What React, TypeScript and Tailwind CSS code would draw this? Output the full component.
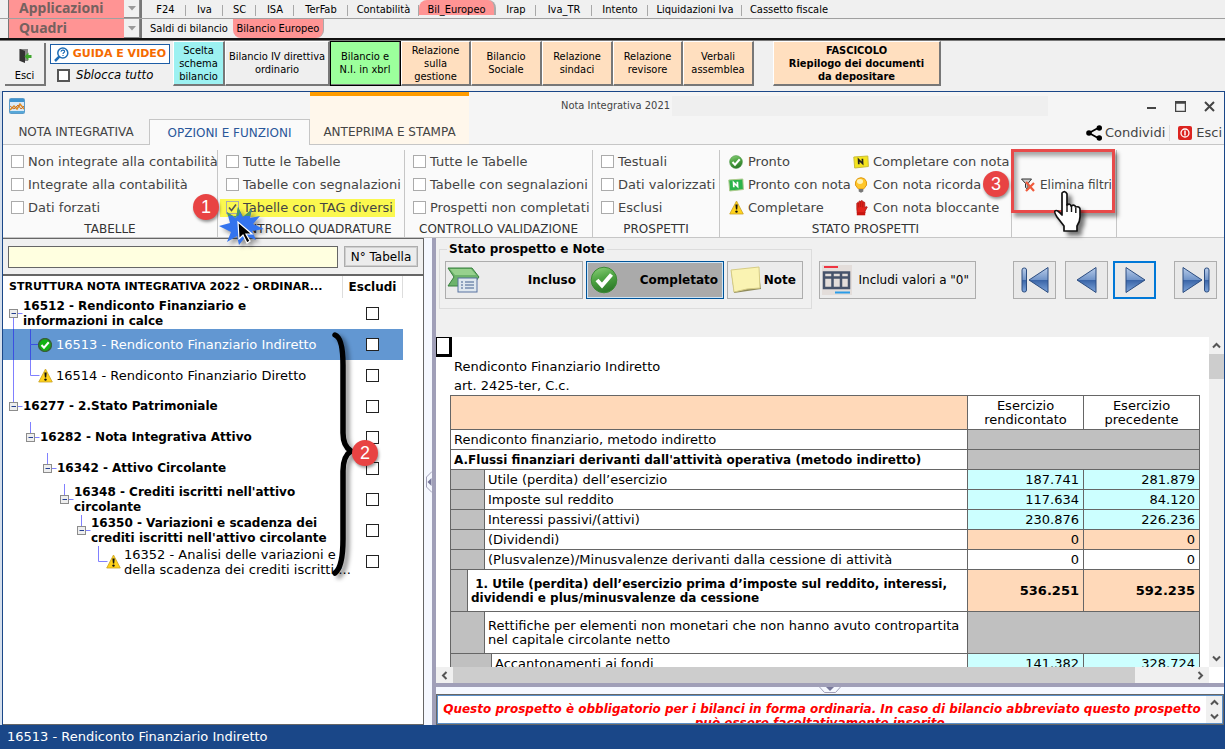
import type { ReactNode } from "react";
import clsx from "clsx";

const modules = [
  { label: "F24", width: "w-[41px]" },
  { label: "Iva", width: "w-[37px]" },
  { label: "SC", width: "w-[33px]" },
  { label: "ISA", width: "w-[38px]" },
  { label: "TerFab", width: "w-[54px]" },
  { label: "Contabilità", width: "w-[71px]" },
  { label: "Bil_Europeo", width: "w-[77px]", active: true },
  { label: "Irap", width: "w-[40px]" },
  { label: "Iva_TR", width: "w-[56px]" },
  { label: "Intento", width: "w-[56px]" },
  { label: "Liquidazioni Iva", width: "w-[94px]" },
  { label: "Cassetto fiscale", width: "w-[94px]" },
];

const toolbar = [
  { label: "Scelta\nschema\nbilancio", style: "w-[52px] bg-[#9cf1f1]" },
  { label: "Bilancio IV direttiva\nordinario", style: "w-[105px] bg-[#efefef]" },
  { label: "Bilancio e\nN.I. in xbrl", style: "w-[71px] bg-[#9cff9c] outline outline-black -outline-offset-1" },
  { label: "Relazione\nsulla\ngestione", style: "w-[70px] bg-[#ffdfbf]" },
  { label: "Bilancio\nSociale", style: "w-[71px] bg-[#ffdfbf]" },
  { label: "Relazione\nsindaci", style: "w-[71px] bg-[#ffdfbf]" },
  { label: "Relazione\nrevisore", style: "w-[70px] bg-[#ffdfbf]" },
  { label: "Verbali\nassemblea", style: "w-[71px] bg-[#ffdfbf]" },
  { label: "FASCICOLO\nRiepilogo dei documenti\nda depositare", style: "ml-[19px] w-[168px] bg-[#ffdfbf] font-bold" },
];

type Node = {
  id: string;
  label: string;
  level: number;
  kind: "group" | "ok" | "warn";
  through?: number[];
  down?: boolean;
  first?: boolean;
  selected?: boolean;
};

const nodes: Node[] = [
  { id: "16512", label: "16512 - Rendiconto Finanziario e\ninformazioni in calce", level: 0, kind: "group", down: true, first: true },
  { id: "16513", label: "16513 - Rendiconto Finanziario Indiretto", level: 1, kind: "ok", through: [0], down: true, selected: true },
  { id: "16514", label: "16514 - Rendiconto Finanziario Diretto", level: 1, kind: "warn", through: [0] },
  { id: "16277", label: "16277 - 2.Stato Patrimoniale", level: 0, kind: "group" },
  { id: "16282", label: "16282 - Nota Integrativa Attivo", level: 1, kind: "group" },
  { id: "16342", label: "16342 - Attivo Circolante", level: 2, kind: "group" },
  { id: "16348", label: "16348 - Crediti iscritti nell'attivo\ncircolante", level: 3, kind: "group" },
  { id: "16350", label: "16350 - Variazioni e scadenza dei\ncrediti iscritti nell'attivo circolante", level: 4, kind: "group" },
  { id: "16352", label: "16352 - Analisi delle variazioni e\ndella scadenza dei crediti iscritti.:..", level: 5, kind: "warn" },
];

type Row = { label: string; indent: number; values?: string[]; tone?: string; bold?: boolean; height: string };

const rows: Row[] = [
  { label: "Rendiconto finanziario, metodo indiretto", indent: 0, height: "h-5" },
  { label: "A.Flussi finanziari derivanti dall'attività operativa (metodo indiretto)", indent: 0, bold: true, height: "h-5" },
  { label: "Utile (perdita) dell’esercizio", indent: 2, values: ["187.741", "281.879"], tone: "bg-[#ccffff]", height: "h-5" },
  { label: "Imposte sul reddito", indent: 2, values: ["117.634", "84.120"], tone: "bg-[#ccffff]", height: "h-5" },
  { label: "Interessi passivi/(attivi)", indent: 2, values: ["230.876", "226.236"], tone: "bg-[#ccffff]", height: "h-5" },
  { label: "(Dividendi)", indent: 2, values: ["0", "0"], tone: "bg-[#ffd9b9]", height: "h-5" },
  { label: "(Plusvalenze)/Minusvalenze derivanti dalla cessione di attività", indent: 2, values: ["0", "0"], tone: "bg-white", height: "h-5" },
  { label: " 1. Utile (perdita) dell’esercizio prima d’imposte sul reddito, interessi,\ndividendi e plus/minusvalenze da cessione", indent: 1, values: ["536.251", "592.235"], tone: "bg-[#ffd9b9]", bold: true, height: "h-[42px]" },
  { label: "Rettifiche per elementi non monetari che non hanno avuto contropartita\nnel capitale circolante netto", indent: 2, height: "h-[42px]" },
  { label: "Accantonamenti ai fondi", indent: 3, values: ["141.382", "328.724"], tone: "bg-[#ccffff]", height: "h-5" },
];

const Warning = () => (
  <svg width="15" height="15" viewBox="0 0 15 15" className="shrink-0">
    <path d="M7.5 1 14.3 14H.7Z" fill="#ffd21a" stroke="#c9a227" strokeWidth=".8" strokeLinejoin="round" />
    <path d="M6.4 4.6h2.3l-.5 5H6.9Z" fill="#111" />
    <circle cx="7.5" cy="11.6" r="1.2" fill="#111" />
  </svg>
);

const Ok = ({ size = 14, dark = false }: { size?: number; dark?: boolean }) => (
  <svg width={size} height={size} viewBox="0 0 28 28" className="shrink-0">
    <defs>
      <linearGradient id="okFill" x2=".3" y2="1">
        <stop stopColor="#8ed27c" />
        <stop offset=".5" stopColor="#4fa544" />
        <stop offset="1" stopColor="#2f7d2b" />
      </linearGradient>
    </defs>
    <circle cx="14" cy="14" r="12.8" fill={dark ? "#12b312" : "url(#okFill)"} stroke={dark ? "#376038" : "#3d8a37"} strokeWidth={dark ? 3 : 1} />
    <path d="m7 14 5 5.5L21.500 8.500" fill="none" stroke="#fff" strokeWidth="4" />
  </svg>
);

const NoteFlag = ({ green = false }: { green?: boolean }) => (
  <svg width="16" height="14" viewBox="0 0 16 14" className="shrink-0">
    <path d="m.8 2 14-1 .6 10.500-13.700 1.500Z" fill={green ? "#2bb34b" : "#f4e41e"} stroke={green ? "#aeca8c" : "#c9bd3a"} />
    <path d="M5.800 9.300 5.600 4.600l4 3.900-.2-4.700" fill="none" stroke={green ? "#fff" : "#222"} strokeWidth="1.700" />
  </svg>
);

const Bulb = () => (
  <svg width="14" height="16" viewBox="0 0 14 16" className="shrink-0">
    <path d="M7 .7a5.700 5.700 0 0 0-3.500 10.200L4.500 12h5l1-1.100A5.700 5.700 0 0 0 7 .7Z" fill="#ffc629" stroke="#e09a12" />
    <ellipse cx="6" cy="4.500" rx="3" ry="2.400" fill="#fff3b8" />
    <path d="M4.700 12h4.600v2.500L7 15.700l-2.300-1.200Z" fill="#777" />
  </svg>
);

const StopHand = () => (
  <svg width="14" height="16" viewBox="0 0 14 16" className="shrink-0">
    <path d="M2.800 9V3.200q.9-1.400 1.900 0V1.700q1-1.400 2 0V1q1.200-1.200 2.100.2v1q1.200-1 2 .4v5q1.500-1.600 2.500-.6l-2.200 4.200V13H3.200Z" fill="#e3231b" stroke="#a51410" strokeWidth=".7" />
    <path d="M4.700 3v4.500M6.700 2v5M8.800 2.500V7.500" stroke="#a51410" strokeWidth=".7" />
    <path d="M2.800 12.500h8.400v2.800H2.800Z" fill="#c9150f" />
  </svg>
);

const Callout = ({ n, className }: { n: number; className: string }) => (
  <span className={clsx("absolute z-20 flex size-[26px] items-center justify-center rounded-full bg-[#e84343] font-['Liberation_Sans'] text-lg text-white shadow-[1px_2px_3px_#0006]", className)}>
    {n}
  </span>
);

const Check = ({ label, checked, highlight }: { label: string; checked?: boolean; highlight?: boolean }) => (
  <label className="flex h-[23px] items-center whitespace-nowrap text-[#444]">
    <span className={clsx("flex h-[18px] items-center gap-1", highlight && "-ml-1.5 bg-[#fbf84f] pr-0.5 pl-1.5")}>
      <span className="grid">
        <input type="checkbox" defaultChecked={checked} className={clsx("peer col-start-1 row-start-1 size-[13px] appearance-none border border-[#ababab]", highlight ? "bg-transparent" : "bg-white")} />
        <svg viewBox="0 0 13 13" className="pointer-events-none col-start-1 row-start-1 hidden size-[13px] peer-checked:block">
          <path d="m3 6.500 2.500 3 4.500-6" fill="none" stroke="#555" strokeWidth="1.600" />
        </svg>
      </span>
      {label}
    </span>
  </label>
);

const Group = ({ title, width, children }: { title: string; width: string; children: ReactNode }) => (
  <section className={clsx("relative flex shrink-0 flex-col border-r border-[#c6c6c6] pl-2", width)}>
    {children}
    <h2 className="mt-auto pr-2 text-center text-xs text-[#333]">{title}</h2>
  </section>
);

const RibbonLink = ({ icon, label, className }: { icon: ReactNode; label: string; className?: string }) => (
  <button className={clsx("flex h-[23px] items-center gap-1 whitespace-nowrap text-[#444]", className)}>
    <span className="flex w-4 justify-center">{icon}</span>
    {label}
  </button>
);

const Picker = ({ label }: { label: string }) => (
  <div className="relative ml-2 h-full w-[134px] border-l border-[#777]">
    <select aria-label={label} className="block h-full w-full appearance-none border-r-2 border-[#777] bg-[#ff9494] pb-0.5 pl-2.5 font-['Noto_Sans',sans-serif] text-sm leading-4 font-bold text-[#75615f]">
      <option>{label}</option>
    </select>
    <span className="pointer-events-none absolute inset-y-0 right-0.5 flex w-4 items-center justify-center border-r border-b border-[#888] bg-[#f0f0f0]">
      <svg width="8" height="5"><path d="M0 0h8L4 4.500Z" fill="#9a9a9a" /></svg>
    </span>
  </div>
);

/* Connector lines, expander and leaf icon slot of one tree row */
const Branch = ({ node }: { node: Node }) => {
  const x = 10 + node.level * 17 + 0.5;
  const group = node.kind === "group";
  return (
    <svg width={20 + node.level * 17} height="31" className="shrink-0" stroke={node.selected ? "#3a50e0" : "#8080ff"} fill="none">
      {node.through?.map((l) => <path key={l} d={`M${10.5 + l * 17} 0V31`} />)}
      {!node.first && <path d={`M${x} 0V15.500`} />}
      {node.down && <path d={`M${x} 15.500V31`} />}
      <path d={`M${x} 15.500H${x + 9}`} />
      {group && (
        <>
          <rect x={x - 4} y="11.500" width="8" height="8" fill="#eee" stroke="#8c8c8c" />
          <path d={`M${x - 2} 15.500h4.500`} stroke="#26418f" />
        </>
      )}
    </svg>
  );
};

const NavIcon = ({ back = false, edge = false }: { back?: boolean; edge?: boolean }) => (
  <svg width="30" height="28" viewBox="0 0 30 28" className={back ? "-scale-x-100" : ""}>
    <defs>
      <linearGradient id="nav" x2="0" y2="1">
        <stop stopColor="#b9cdea" />
        <stop offset=".5" stopColor="#6f93c8" />
        <stop offset=".52" stopColor="#3b66a8" />
        <stop offset="1" stopColor="#7fa6dc" />
      </linearGradient>
    </defs>
    <path d={edge ? "M2 1.500 21 14 2 26.500Z" : "M6 1.500 25 14 6 26.500Z"} fill="url(#nav)" stroke="#2c4d80" />
    {edge && <rect x="23.500" y="2" width="4.500" height="24" rx="2" fill="url(#nav)" stroke="#2c4d80" />}
  </svg>
);

const NavButton = ({ label, className, children }: { label: string; className?: string; children: ReactNode }) => (
  <button aria-label={label} className={clsx("flex h-[38px] w-[43px] items-center justify-center bg-[#e9e9e9]", className ?? "border border-[#adadad]")}>
    {children}
  </button>
);

const Arrow = ({ dir }: { dir: "up" | "down" | "left" | "right" }) => (
  <svg width="9" height="9" viewBox="0 0 9 9" className={clsx(dir === "down" && "rotate-180", dir === "left" && "-rotate-90", dir === "right" && "rotate-90")}>
    <path d="m1 6.500 3.500-3.500L8 6.500" fill="none" stroke="#555" strokeWidth="2" />
  </svg>
);

const TopMenus = () => (
  <header className="shrink-0 bg-[#f0f0f0] font-['DejaVu_Sans_Condensed','DejaVu_Sans',sans-serif] text-[11px]">
    <div className="flex h-[19px] border-b border-[#a0a0a0]">
      <Picker label="Applicazioni" />
      <nav className="ml-[3px] flex">
        {modules.map((m) => (
          <button
            key={m.label}
            className={clsx(
              "flex shrink-0 items-center justify-center whitespace-nowrap",
              m.width,
              m.active ? "mb-[3px] rounded-t-lg border-r-2 border-[#aaa] bg-[#ff9494] pt-[5px]" : "bg-[linear-gradient(#a8a8a8,#a8a8a8)] bg-[length:1px_11px] bg-[position:right_5px] bg-no-repeat pt-0.5 last:bg-none",
            )}
          >
            {m.label}
          </button>
        ))}
      </nav>
    </div>
    <div className="flex h-[19px]">
      <Picker label="Quadri" />
      <nav className="ml-[3px] flex">
        <button className="w-[88px]">Saldi di bilancio</button>
        <button className="w-[91px] rounded-b-lg border-r border-[#aaa] bg-[#ff9494]">Bilancio Europeo</button>
      </nav>
    </div>
    <div className="flex h-[53px] border-t-2 border-[#111] pl-[5px] pt-px shadow-[inset_0_1px_#777]">
      <button className="mt-0.5 flex h-[43px] w-[41px] flex-col items-center justify-end border-r-2 border-b-2 border-[#777]">
        <svg width="16" height="16" viewBox="0 0 16 16">
          <path d="M2 1h9v12H2Z" fill="#888" />
          <path d="m3 1 5 2v12l-5-2Z" fill="#333" />
          <path d="M14.500 7h-3V4.500l-4 4 4 4V10h3Z" fill="#3fa62d" />
        </svg>
        <span className="pt-1">Esci</span>
      </button>
      <div className="ml-1 flex w-[120px] flex-col pt-[3px]">
        <button className="flex h-5 items-center justify-center gap-1 border border-[#1c5da6] bg-white font-['DejaVu_Sans',sans-serif] text-[11px] font-bold whitespace-nowrap text-[#f56a00]">
          <svg width="15" height="15" viewBox="0 0 15 15" fill="none" stroke="#1f6db5">
            <circle cx="8.800" cy="6" r="5" strokeWidth="1.500" />
            <path d="M5.300 9.700 1 14" strokeWidth="2.500" />
            <path d="M7 4.800q.2-1.800 2-1.700 2 .3 1.500 1.800-1.500 1-1.500 2M9 8v1" strokeWidth="1.200" />
          </svg>
          GUIDA E VIDEO
        </button>
        <label className="flex items-center gap-1.5 pt-[3px] pl-[7px] text-[13px] italic">
          <input type="checkbox" className="size-[13px] appearance-none border-2 border-[#555] bg-white" />
          Sblocca tutto
        </label>
      </div>
      <div className="ml-[3px] flex h-[45px]">
        {toolbar.map((b) => (
          <button key={b.label} className={clsx("shrink-0 border-t border-l border-r-2 border-b-2 border-t-white border-l-white border-r-[#777] border-b-[#777] leading-[13px] whitespace-pre-line", b.style)}>
            {b.label}
          </button>
        ))}
      </div>
    </div>
  </header>
);

const TitleBar = () => (
  <div className="flex h-[53px] shrink-0 border-b border-[#c6c6c6] bg-[#f5f5f5] text-[#444]">
    <div className="flex w-[307px] shrink-0 flex-col justify-between">
      <svg width="16" height="16" viewBox="0 0 16 16" className="mt-1.5 ml-1.5">
        <rect x=".5" y=".5" width="15" height="15" rx="1" fill="#dceaf5" stroke="#5b9bc9" />
        <path d="M1 1h14v3H1Z" fill="#3e93cf" />
        <path d="M1 12 5 8l3 3 3-5 4 5" fill="none" stroke="#e08a1e" strokeWidth="1.500" />
        <path d="M1 8 5 11l4-4 3 4 3-3" fill="none" stroke="#c9702a" />
        <path d="M1 13h14v2H1Z" fill="#56a7d8" />
      </svg>
      <div className="-mb-px flex h-[26px] text-xs">
        <button className="w-[146px] shrink-0 whitespace-nowrap">NOTA INTEGRATIVA</button>
        <button className="w-[161px] shrink-0 border border-b-0 border-[#c6c6c6] bg-[#fafafa] whitespace-nowrap text-[#2a579a]">OPZIONI E FUNZIONI</button>
      </div>
    </div>
    <button className="flex w-[159px] shrink-0 items-end justify-center border-t-4 border-[#ff9c00] bg-[#fff7eb] pb-1 text-xs whitespace-nowrap">ANTEPRIMA E STAMPA</button>
    <div className="flex min-w-0 grow flex-col justify-between">
      <div className="flex items-center pt-1">
        <h1 className="mr-0.5 ml-[92px] shrink-0 font-['DejaVu_Sans_Condensed','DejaVu_Sans',sans-serif] text-[11px]">Nota Integrativa 2021</h1>
        <span className="h-5 min-w-0 max-w-[376px] grow bg-[#efefef]" />
        <div className="ml-auto flex gap-[18px] pr-[9px]">
          <button aria-label="Riduci"><svg width="11" height="11"><path d="M1 7h9" stroke="#444" strokeWidth="2" /></svg></button>
          <button aria-label="Ingrandisci"><svg width="11" height="11" fill="none" stroke="#444"><path d="M.5.5h10v10H.5ZM0 2h11" strokeWidth="1.500" /></svg></button>
          <button aria-label="Chiudi"><svg width="11" height="11"><path d="m1 1 9 9M10 1 1 10" stroke="#444" strokeWidth="2" /></svg></button>
        </div>
      </div>
      <div className="flex h-[23px] items-center justify-end gap-1 pr-0.5">
        <button className="flex items-center gap-0.5">
          <svg width="17" height="16" viewBox="0 0 17 16">
            <path d="M13 2.500 3 8l10 5.500" fill="none" stroke="#000" strokeWidth="1.800" />
            <circle cx="13.300" cy="3" r="2.700" /><circle cx="3" cy="8" r="2.800" /><circle cx="13.300" cy="13" r="2.700" />
          </svg>
          Condividi
        </button>
        <button className="flex items-center gap-1 border-l border-[#ddd] pl-2">
          <svg width="14" height="14" viewBox="0 0 14 14">
            <rect width="14" height="14" rx="2" fill="#dc2420" />
            <circle cx="7" cy="7" r="4" fill="none" stroke="#fff" strokeWidth="1.300" />
            <path d="M7 4.500v5" stroke="#fff" strokeWidth="1.500" />
          </svg>
          Esci
        </button>
      </div>
    </div>
  </div>
);

const Ribbon = () => (
  <div className="flex h-[93px] shrink-0 border-b border-[#c6c6c6] bg-[#fafafa] pt-[5px]">
    <Group title="TABELLE" width="w-[215px]">
      <Check label="Non integrate alla contabilità" />
      <Check label="Integrate alla contabilità" />
      <Check label="Dati forzati" />
      <Callout n={1} className="-right-0.5 top-11" />
    </Group>
    <Group title="CONTROLLO QUADRATURE" width="w-[187px]">
      <Check label="Tutte le Tabelle" />
      <Check label="Tabelle con segnalazioni" />
      <Check label="Tabelle con TAG diversi" checked highlight />
      <svg width="48" height="44" viewBox="0 0 48 44" className="pointer-events-none absolute top-14 left-0 z-10 drop-shadow-[3px_3px_2px_#0006]">
        <path d="m1 20 11-3L9 6l9 6 2-11 5 10 9-8-2 9 10-2-7 8 11 5-12 2 4 9-10-4-7 9-2-9-10 6 4-10Z" fill="#3474ee" />
        <path d="m9 6 9 6 2-11 5 10 9-8-2 7H10Z" fill="#4b9a62" />
        <path d="m12 15 8-4 2-5 3 6 5-2 5 4-6 8-14 1Z" fill="#3474ee" />
        <path d="m20 16 1 17 4-4 4 8 3-2-4-7h6Z" fill="#000" stroke="#fff" strokeWidth="1.200" />
      </svg>
    </Group>
    <Group title="CONTROLLO VALIDAZIONE" width="w-[188px]">
      <Check label="Tutte le Tabelle" />
      <Check label="Tabelle con segnalazioni" />
      <Check label="Prospetti non completati" />
    </Group>
    <Group title="PROSPETTI" width="w-[127px]">
      <Check label="Testuali" />
      <Check label="Dati valorizzati" />
      <Check label="Esclusi" />
    </Group>
    <Group title="STATO PROSPETTI" width="w-[292px]">
      <div className="flex">
        <div className="w-[125px] shrink-0">
          <RibbonLink icon={<Ok />} label="Pronto" />
          <RibbonLink icon={<NoteFlag green />} label="Pronto con nota" />
          <RibbonLink icon={<Warning />} label="Completare" />
        </div>
        <div>
          <RibbonLink icon={<NoteFlag />} label="Completare con nota" />
          <RibbonLink icon={<Bulb />} label="Con nota ricorda" />
          <RibbonLink icon={<StopHand />} label="Con nota bloccante" />
        </div>
      </div>
      <Callout n={3} className="right-0.5 top-[21px]" />
    </Group>
    <section className="relative w-[105px] shrink-0 border-r border-[#c6c6c6] pt-[23px] pl-2">
      <RibbonLink
        className="text-xs"
        icon={
          <svg width="14" height="14" viewBox="0 0 14 14">
            <path d="M.5 1h10L7 5.500v6L4.500 9.500v-4Z" fill="#ccc" stroke="#333" />
            <path d="m5 4 8 9M13 5l-8 8" stroke="#f05a3c" strokeWidth="2.200" />
          </svg>
        }
        label="Elimina filtri"
      />
      <span className="pointer-events-none absolute -top-px -left-px h-16 w-[104px] border-[3px] border-[#e84a4a] shadow-[3px_4px_4px_#0006,inset_3px_4px_4px_#0005]" />
      <svg width="32" height="44" viewBox="0 0 32 44" className="pointer-events-none absolute top-10 left-10 z-10 drop-shadow-[4px_4px_2px_#0008]">
        <path d="M10 3q3-3 5 1v11q3-2 4 1 4-2 4.500 1 4-1 4.500 2v8q0 5-3 9v5H12v-5l-7-9q-3-5-2-6 2-2 7 4Z" fill="#fff" stroke="#111" strokeWidth="1.700" strokeLinejoin="round" />
        <path d="M15 14v8m4.500-6v6m4.300-4v5" stroke="#111" strokeWidth="1.400" />
      </svg>
    </section>
  </div>
);

const TreePanel = () => (
  <aside className="flex w-[421px] shrink-0 flex-col border border-l-0 border-[#666] bg-white">
    <div className="flex h-[37px] items-center gap-1.5 border-b-2 border-[#666] bg-[#f0f0f0] px-[5px]">
      <input aria-label="Cerca" className="h-[22px] min-w-0 grow border border-[#666] bg-[#ffffe0] px-1" />
      <button className="h-[21px] w-[74px] border-2 border-[#cfcfcf] bg-[#ececec] text-xs leading-4 whitespace-nowrap outline outline-[#adadad] -outline-offset-1">N° Tabella</button>
    </div>
    <div className="relative min-h-0 grow overflow-hidden">
      <table className="w-[400px] table-fixed border-collapse text-left">
        <colgroup>
          <col />
          <col className="w-[60px]" />
        </colgroup>
        <thead>
          <tr className="h-[22px]">
            <th className="border-r border-[#ddd] pl-1.5 text-[11px] font-bold whitespace-nowrap">STRUTTURA NOTA INTEGRATIVA 2022 - ORDINAR...</th>
            <th className="border-r border-[#ddd] text-center text-xs font-bold">Escludi</th>
          </tr>
        </thead>
        <tbody>
          {nodes.map((n) => (
            <tr key={n.id} className={clsx(n.selected && "bg-[#6297d2] text-white")}>
              <td className="p-0">
                <div className="flex h-[31px] items-center">
                  <Branch node={n} />
                  {n.kind !== "group" && (
                    <span className="-ml-0.5 flex w-[18px] shrink-0">{n.kind === "ok" ? <Ok dark /> : <Warning />}</span>
                  )}
                  <span className={clsx("leading-[15px] whitespace-pre", n.kind === "group" && "text-xs leading-[15px] font-bold")}>{n.label}</span>
                </div>
              </td>
              <td className="p-0">
                <input type="checkbox" aria-label={`Escludi ${n.id}`} className="mx-auto block size-[13px] appearance-none border border-[#222] bg-white" />
              </td>
            </tr>
          ))}
        </tbody>
      </table>
      <svg width="26" height="250" viewBox="0 0 26 250" className="pointer-events-none absolute top-[54px] left-[327px] drop-shadow-[4px_3px_2px_#0006]">
        <path d="M5 5q8 3 8 30v68q0 13 8 18-8 5-8 20v68q0 28-8 34" fill="none" stroke="#000" strokeWidth="5.500" strokeLinecap="round" />
      </svg>
      <Callout n={2} className="top-[164px] left-[349px]" />
    </div>
  </aside>
);

const StatusBar = () => (
  <div className="flex h-[99px] shrink-0 items-start bg-[#f0f0f0] pl-[3px]">
    <fieldset className="mt-[3px] flex h-[68px] w-[373px] shrink-0 gap-[3px] border border-[#dcdcdc] px-[5px]">
      <legend className="ml-0.5 px-0.5 text-xs leading-4 font-bold">Stato prospetto e Note</legend>
      <button className="mt-1 flex h-[38px] w-[138px] items-center justify-between border border-[#adadad] bg-[#ececec] pr-1.5 pl-px text-xs font-bold">
        <svg width="33" height="28" viewBox="0 0 33 28">
          <path d="M1 2h24l7 9-7 9H1l6-9Z" fill="#6db36b" stroke="#37803d" />
          <path d="M3 3h21l5 6H8Z" fill="#97d18d" />
          <rect x="11" y="12" width="19" height="14" fill="#dfe8ef" stroke="#5873a0" />
          <path d="M14 16h2m2 0h9m-13 3h2m2 0h9m-13 3h2m2 0h9" stroke="#43618f" />
        </svg>
        Incluso
      </button>
      <button className="mt-1 flex h-[38px] w-[138px] items-center justify-between border-2 border-[#cce4f7] bg-[#aaa] pr-1 pl-0.5 text-xs font-bold outline outline-[#005499] -outline-offset-1">
        <Ok size={28} />
        Completato
      </button>
      <button className="mt-1 flex h-[38px] w-[76px] items-center justify-between border border-[#adadad] bg-[#ececec] pr-1.5 pl-0.5 text-xs font-bold">
        <svg width="32" height="28" viewBox="0 0 32 28">
          <path d="m1 5 27-3 3 21L4 27Z" fill="#8e8a5a" />
          <path d="m1 4 28-3 1 21-13 1-13 3Z" fill="#faf3b2" stroke="#d6cc85" />
        </svg>
        Note
      </button>
    </fieldset>
    <button className="mt-[23px] ml-[7px] flex h-[38px] w-[157px] shrink-0 items-center justify-between border border-[#adadad] bg-[#ececec] pr-1.5 pl-0.5 text-xs">
      <svg width="30" height="30" viewBox="0 0 30 30">
        <rect width="30" height="30" fill="#e3ddda" />
        <path d="M2 2h14" stroke="#ef3340" strokeWidth="2" />
        <path d="M2 7.500h25V23H2ZM2 12.500h25M10.500 7v16M19 7v16" fill="none" stroke="#46536b" strokeWidth="2.500" />
        <path d="M13 27.500h15" stroke="#2a9ce8" strokeWidth="2" />
      </svg>
      Includi valori a "0"
    </button>
    <div className="mt-[23px] mr-[7px] ml-auto flex">
      <NavButton label="Primo"><NavIcon back edge /></NavButton>
      <NavButton label="Precedente" className="ml-[9px] border border-[#adadad]"><NavIcon back /></NavButton>
      <NavButton label="Successivo" className="ml-[5px] border-2 border-[#0078d7]"><NavIcon /></NavButton>
      <NavButton label="Ultimo" className="ml-[18px] border border-[#adadad]"><NavIcon edge /></NavButton>
    </div>
  </div>
);

const Statement = () => (
  <div className="flex min-h-0 grow bg-white">
    <div className="flex min-w-0 grow flex-col">
      <div className="min-h-0 grow overflow-hidden pr-[9px] pl-3.5">
        <div className="-ml-3.5 h-5 w-4 border border-r-[3px] border-b-[3px] border-black" />
        <p className="pl-1 leading-5">Rendiconto Finanziario Indiretto</p>
        <p className="pl-1 leading-[18px]">art. 2425-ter, C.c.</p>
        <table className="w-full table-fixed border-collapse text-left leading-3.5 [&_td]:border [&_td]:border-[#666] [&_th]:border [&_th]:border-[#666]">
          <colgroup>
            <col className="w-[17px]" />
            <col className="w-[17px]" />
            <col className="w-[7px]" />
            <col />
            <col className="w-[116px]" />
            <col className="w-[116px]" />
          </colgroup>
          <thead>
            <tr className="h-[34px]">
              <th colSpan={4} className="bg-[#ffd9b9]" />
              <th className="p-0 text-center font-normal">Esercizio<br />rendicontato</th>
              <th className="p-0 text-center font-normal">Esercizio<br />precedente</th>
            </tr>
          </thead>
          <tbody>
            {rows.map((r) => (
              <tr key={r.label} className={clsx(r.height, r.bold && "font-bold")}>
                {r.indent > 0 && <td colSpan={r.indent} className="bg-[#c0c0c0] p-0" />}
                <td colSpan={4 - r.indent} className={clsx("py-0 pr-0 pl-[3px] whitespace-pre", r.bold && "text-xs leading-3.5")}>{r.label}</td>
                {r.values ? (
                  r.values.map((v, i) => <td key={i} className={clsx("py-0 pr-1 pl-0 text-right", r.tone)}>{v}</td>)
                ) : (
                  <td colSpan={2} className="bg-[#c0c0c0] p-0" />
                )}
              </tr>
            ))}
          </tbody>
        </table>
      </div>
      <div className="flex h-4 shrink-0 bg-[#f0f0f0]">
        <button aria-label="Scorri a sinistra" className="flex w-[17px] items-center justify-center"><Arrow dir="left" /></button>
        <div className="mr-[57px] grow bg-[#cdcdcd]" />
        <button aria-label="Scorri a destra" className="flex w-[17px] items-center justify-center"><Arrow dir="right" /></button>
      </div>
    </div>
    <div className="mb-4 flex w-[15px] shrink-0 flex-col bg-[#f0f0f0]">
      <button aria-label="Scorri in alto" className="flex h-[17px] items-center justify-center"><Arrow dir="up" /></button>
      <div className="h-[25px] bg-[#cdcdcd]" />
      <button aria-label="Scorri in basso" className="mt-auto flex h-[17px] items-center justify-center"><Arrow dir="down" /></button>
    </div>
  </div>
);

export default function App() {
  return (
    <div className="flex h-screen flex-col overflow-hidden bg-[#d5dfec] font-['DejaVu_Sans',sans-serif] text-[13px] leading-4 text-black">
      <TopMenus />
      <main className="ml-0.5 flex min-h-0 grow flex-col border border-b-0 border-[#1a4788] bg-[#f5f8ff]">
        <TitleBar />
        <Ribbon />
        <div className="flex min-h-0 grow">
          <TreePanel />
          <div className="flex w-3 shrink-0 items-center border-r-4 border-[#a09fb8] bg-[#f5f8ff]">
            <svg width="8" height="22" viewBox="0 0 8 22">
              <path d="M8 .5 2.500 6v10L8 21.500" fill="none" stroke="#a09fb8" />
              <path d="M7.500 7v8L3.500 11Z" fill="#77779a" />
            </svg>
          </div>
          <div className="flex min-w-0 grow flex-col">
            <StatusBar />
            <Statement />
            <div className="flex h-[11px] shrink-0 justify-center border-t-4 border-[#a09fb8] bg-[#f5f8ff]">
              <svg width="22" height="7" viewBox="0 0 22 7">
                <path d="m.5 0 5 5.500h11l5-5.500" fill="none" stroke="#a09fb8" />
                <path d="M7 0h8l-4 4Z" fill="#77779a" />
              </svg>
            </div>
            <div className="flex h-[31px] shrink-0 border-2 border-[#5b8fc7] bg-white outline outline-[#666] -outline-offset-1">
              <p className="min-w-0 grow overflow-hidden pt-1.5 text-center text-xs leading-[14px] font-bold text-[#f00] italic">
                Questo prospetto è obbligatorio per i bilanci in forma ordinaria. In caso di bilancio abbreviato questo prospetto può essere facoltativamente inserito.
              </p>
              <div className="flex w-4 shrink-0 flex-col items-center justify-around bg-[#f0f0f0]">
                <button aria-label="Nota precedente"><Arrow dir="up" /></button>
                <button aria-label="Nota successiva"><Arrow dir="down" /></button>
              </div>
            </div>
          </div>
        </div>
      </main>
      <footer className="flex h-6 shrink-0 items-center bg-[#1a4788] pl-[7px] text-white">16513 - Rendiconto Finanziario Indiretto</footer>
    </div>
  );
}
